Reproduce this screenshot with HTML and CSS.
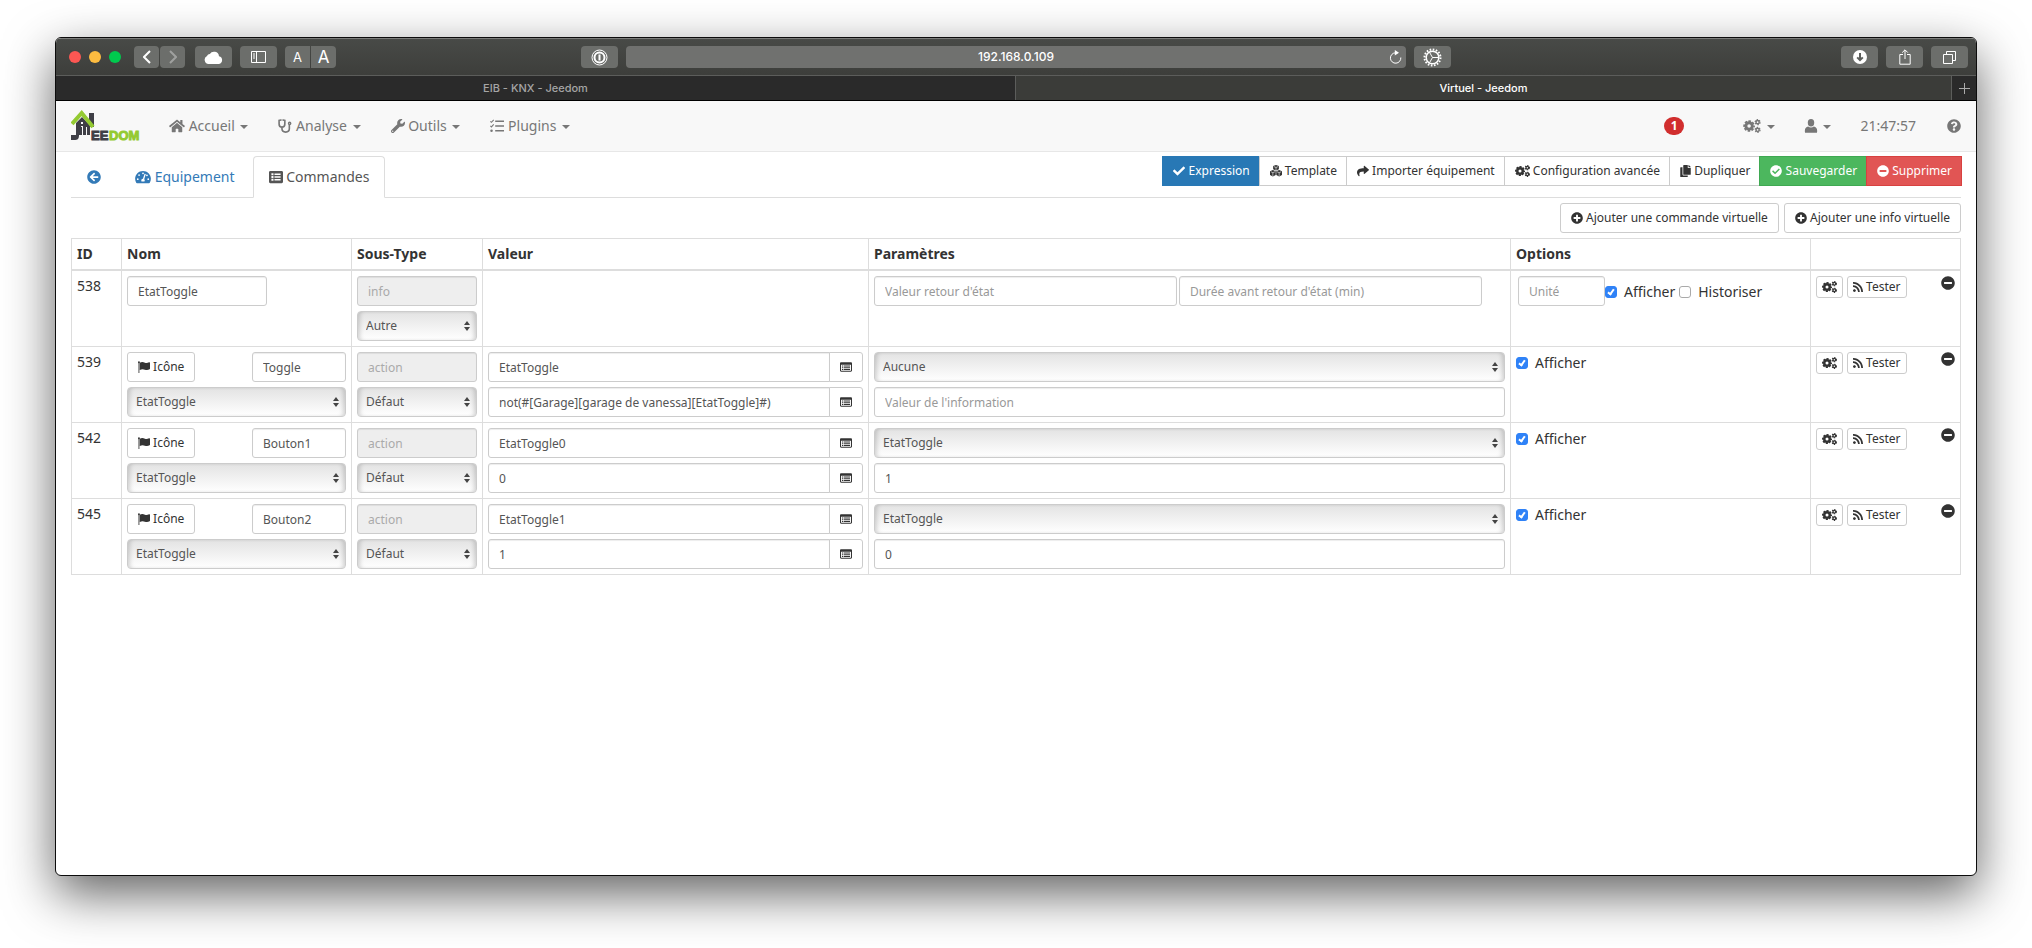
FILE: index.html
```html
<!DOCTYPE html>
<html lang="fr">
<head>
<meta charset="utf-8">
<title>Virtuel - Jeedom</title>
<link rel="stylesheet" href="styles.css">
</head>
<body>
<svg class="sprite" aria-hidden="true">
  <symbol id="check" viewBox="0 0 512 512"><path d="M173.898 439.404l-166.400-166.400c-9.997-9.997-9.997-26.206 0-36.204l36.203-36.204c9.997-9.998 26.207-9.998 36.204 0L192 312.690 432.095 72.596c9.997-9.997 26.207-9.997 36.204 0l36.203 36.204c9.997 9.997 9.997 26.206 0 36.204l-294.400 294.401c-9.998 9.997-26.207 9.997-36.204-.001z"/></symbol>
  <symbol id="share" viewBox="0 0 512 512"><path d="M503.691 189.836L327.687 37.851C312.281 24.546 288 35.347 288 56.015v80.053C127.371 137.907 0 170.100 0 322.326c0 61.441 39.581 122.309 83.333 154.132 13.653 9.931 33.111-2.533 28.077-18.631C66.066 312.814 132.917 274.316 288 272.085V360c0 20.700 24.300 31.453 39.687 18.164l176.004-152c11.071-9.562 11.086-26.753 0-36.328z"/></symbol>
  <symbol id="check-circle" viewBox="0 0 512 512"><path d="M504 256c0 136.967-111.033 248-248 248S8 392.967 8 256 119.033 8 256 8s248 111.033 248 248zM227.314 387.314l184-184c6.248-6.248 6.248-16.379 0-22.627l-22.627-22.627c-6.248-6.249-16.379-6.249-22.628 0L216 308.118l-70.059-70.059c-6.248-6.248-16.379-6.248-22.628 0l-22.627 22.627c-6.248 6.248-6.248 16.379 0 22.627l104 104c6.249 6.249 16.379 6.249 22.628.001z"/></symbol>
  <symbol id="minus-circle" viewBox="0 0 512 512"><path d="M256 8C119 8 8 119 8 256s111 248 248 248 248-111 248-248S393 8 256 8zM124 296c-6.600 0-12-5.400-12-12v-56c0-6.600 5.400-12 12-12h264c6.600 0 12 5.400 12 12v56c0 6.600-5.400 12-12 12H124z"/></symbol>
  <symbol id="plus-circle" viewBox="0 0 512 512"><path d="M256 8C119 8 8 119 8 256s111 248 248 248 248-111 248-248S393 8 256 8zm144 276c0 6.600-5.400 12-12 12h-92v92c0 6.600-5.400 12-12 12h-56c-6.600 0-12-5.400-12-12v-92h-92c-6.600 0-12-5.400-12-12v-56c0-6.600 5.400-12 12-12h92v-92c0-6.600 5.400-12 12-12h56c6.600 0 12 5.400 12 12v92h92c6.600 0 12 5.400 12 12v56z"/></symbol>
  <symbol id="cogs" viewBox="0 0 640 512"><g fill="none" stroke="currentColor"><circle cx="214" cy="256" r="118" stroke-width="106"/><circle cx="214" cy="256" r="182" stroke-width="64" stroke-dasharray="92 50.940" stroke-dashoffset="46"/><circle cx="525" cy="116" r="58" stroke-width="54"/><circle cx="525" cy="116" r="90" stroke-width="44" stroke-dasharray="54 40.250"/><circle cx="525" cy="396" r="58" stroke-width="54"/><circle cx="525" cy="396" r="90" stroke-width="44" stroke-dasharray="54 40.250"/></g></symbol>
  <symbol id="home" viewBox="0 0 576 512"><path d="M280 148L96 300v164c0 9 7 16 16 16h112c9 0 16-7 16-16v-96c0-9 7-16 16-16h64c9 0 16 7 16 16v96c0 9 7 16 16 16h112c9 0 16-7 16-16V300L296 148c-5-4-11-4-16 0z"/><path d="M572 251l-84-69V44c0-7-5-12-12-12h-56c-7 0-12 5-12 12v72l-89-74c-18-14-44-14-62 0L4 251c-5 4-6 12-2 17l26 31c4 5 12 6 17 2L280 107c5-4 11-4 16 0l235 194c5 4 13 3 17-2l26-31c4-5 3-13-2-17z"/></symbol>
  <symbol id="stethoscope" viewBox="0 0 512 512"><g fill="none" stroke="currentColor" stroke-width="60" stroke-linecap="round"><path d="M110 36L40 50v130c0 150 210 150 210 0V50L184 36M145 300v60c0 160 270 160 270 0V224"/><circle cx="425" cy="160" r="42" stroke-width="48"/></g></symbol>
  <symbol id="wrench" viewBox="0 0 512 512"><path d="M507.730 109.100c-2.240-9.030-13.540-12.090-20.120-5.510l-74.360 74.360-67.880-11.310-11.310-67.880 74.360-74.360c6.620-6.620 3.430-17.900-5.660-20.160-47.380-11.740-99.550.910-136.580 37.930-39.640 39.640-50.550 97.100-34.050 147.200L18.740 402.760c-24.990 24.990-24.990 65.510 0 90.500 24.990 24.990 65.510 24.990 90.500 0l213.210-213.210c50.120 16.710 107.470 5.680 147.370-34.220 37.070-37.070 49.700-89.320 37.910-136.730zM64 472c-13.250 0-24-10.750-24-24 0-13.260 10.750-24 24-24s24 10.740 24 24c0 13.250-10.750 24-24 24z"/></symbol>
  <symbol id="tasks" viewBox="0 0 512 512"><path d="M190 58h322v56H190zM190 228h322v56H190zM190 398h322v56H190z"/><circle cx="56" cy="426" r="46"/><path fill="none" stroke="currentColor" stroke-width="40" d="M12 84l40 38 84-88M12 250l40 38 84-88"/></symbol>
  <symbol id="user" viewBox="0 0 448 512"><ellipse cx="224" cy="140" rx="118" ry="138"/><path d="M120 272c60 46 148 46 208 0 80 18 120 70 120 150v50c0 20-10 32-32 32H32c-22 0-32-12-32-32v-50c0-80 40-132 120-150z"/></symbol>
  <symbol id="question" viewBox="0 0 512 512"><path d="M504 256c0 136.997-111.043 248-248 248S8 392.997 8 256C8 119.083 119.043 8 256 8s248 111.083 248 248zM262.655 90c-54.497 0-89.255 22.957-116.549 63.758-3.536 5.286-2.353 12.415 2.715 16.258l34.699 26.310c5.205 3.947 12.621 3.008 16.665-2.122 17.864-22.658 30.113-35.797 57.303-35.797 20.429 0 45.698 13.148 45.698 32.958 0 14.976-12.363 22.667-32.534 33.976C247.128 238.528 216 254.941 216 296v4c0 6.627 5.373 12 12 12h56c6.627 0 12-5.373 12-12v-1.333c0-28.462 83.186-29.647 83.186-106.667 0-58.002-60.165-102-116.531-102zM256 338c-25.365 0-46 20.635-46 46 0 25.364 20.635 46 46 46s46-20.636 46-46c0-25.365-20.635-46-46-46z"/></symbol>
  <symbol id="arrow-left" viewBox="0 0 512 512"><path d="M256 504C119 504 8 393 8 256S119 8 256 8s248 111 248 248-111 248-248 248zm28.900-143.600L209.400 288H392c13.300 0 24-10.700 24-24v-16c0-13.300-10.700-24-24-24H209.400l75.500-72.400c9.700-9.300 9.900-24.800.4-34.300l-11-10.900c-9.400-9.400-24.600-9.400-33.900 0L107.700 239c-9.400 9.400-9.400 24.600 0 33.900l132.700 132.700c9.400 9.400 24.600 9.400 33.900 0l11-10.900c9.500-9.500 9.300-25-.4-34.300z"/></symbol>
  <symbol id="gauge" viewBox="0 0 576 512"><path fill-rule="evenodd" d="M288 32C129 32 0 161 0 320c0 53 14 102 39 145 6 9 16 15 27 15h444c11 0 21-6 27-15 25-43 39-92 39-145C576 161 447 32 288 32zm-32 88a32 32 0 1 0 64 0 32 32 0 1 0-64 0zM112 184a32 32 0 1 0 64 0 32 32 0 1 0-64 0zM64 336a32 32 0 1 0 64 0 32 32 0 1 0-64 0zM448 336a32 32 0 1 0 64 0 32 32 0 1 0-64 0zM400 196a32 32 0 1 0 64 0 32 32 0 1 0-64 0zM346 134l46 14-60 190c28 24 24 62 8 78H232c-20-46 6-90 54-94z"/></symbol>
  <symbol id="list-alt" viewBox="0 0 512 512"><path fill-rule="evenodd" d="M48 32h416c27 0 48 21 48 48v352c0 27-21 48-48 48H48c-27 0-48-21-48-48V80c0-27 21-48 48-48zm40 88v76h76v-76zm0 100v76h76v-76zm0 100v76h76v-76zM200 128v56h224v-56zm0 100v56h224v-56zm0 100v56h224v-56z"/></symbol>
  <symbol id="window-list" viewBox="0 0 512 448"><path fill-rule="evenodd" d="M48 24h416c27 0 48 21 48 48v304c0 27-21 48-48 48H48c-27 0-48-21-48-48V72c0-27 21-48 48-48zM44 130v250h424V130zM84 164h50v40H84zm76 0h268v40H160zM84 236h50v40H84zm76 0h268v40H160zM84 308h50v40H84zm76 0h268v40H160z"/></symbol>
  <symbol id="copy" viewBox="0 0 448 512"><path d="M320 448v40c0 13.255-10.745 24-24 24H24c-13.255 0-24-10.745-24-24V120c0-13.255 10.745-24 24-24h72v296c0 30.879 25.121 56 56 56h168zm0-344V0H152c-13.255 0-24 10.745-24 24v368c0 13.255 10.745 24 24 24h272c13.255 0 24-10.745 24-24V128H344c-13.200 0-24-10.800-24-24zm120.971-31.029L375.029 7.029A24 24 0 0 0 358.059 0H352v96h96v-6.059a24 24 0 0 0-7.029-16.970z"/></symbol>
  <symbol id="rss" viewBox="0 0 448 512"><path d="M128.081 415.959c0 35.369-28.672 64.041-64.041 64.041S0 451.328 0 415.959s28.672-64.041 64.041-64.041 64.040 28.673 64.040 64.041zm175.660 47.250c-8.354-154.600-132.185-278.587-286.950-286.950C7.656 175.765 0 183.105 0 192.253v48.069c0 8.415 6.490 15.472 14.887 16.018 111.832 7.284 201.473 96.702 208.772 208.772.547 8.397 7.604 14.887 16.018 14.887h48.069c9.149.001 16.489-7.655 15.995-16.790zm144.249.288C439.596 229.677 251.465 40.445 16.503 32.010 7.473 31.686 0 38.981 0 48.016v48.068c0 8.625 6.835 15.645 15.453 15.999 191.179 7.839 344.627 161.316 352.465 352.465.353 8.618 7.373 15.453 15.999 15.453h48.068c9.034-.001 16.329-7.474 16.005-16.504z"/></symbol>
  <symbol id="flag" viewBox="0 0 512 512"><circle cx="40" cy="52" r="40"/><path d="M22 50h36v462H22zM76 76c90-56 150-30 220-2 60 24 110 14 176-20 20-10 40 0 40 20v250c0 14-6 22-18 30-60 40-130 44-200 16-70-26-130-34-218 14z"/></symbol>
  <symbol id="cubes" viewBox="0 0 512 512"><path d="M256 0l122 44v142l-122 52-122-52V44zM122 216l122 46v160l-122 72L0 422V262zM390 216l122 46v160l-122 72-122-72V262z"/><path fill="none" stroke="#fff" stroke-width="26" d="M166 70l90 34 90-34M256 104v110M34 288l88 36 92-36M122 324v150M298 288l92 36 88-36M390 324v150"/></symbol>
</svg>

<div class="window">
  <header class="toolbar">
    <div class="tools tools-left">
      <span class="dot dot-red"></span><span class="dot dot-yellow"></span><span class="dot dot-green"></span>
      <div class="pair pair-nav">
        <button class="tool tool-narrow" aria-label="Précédent"><svg width="8" height="14" viewBox="0 0 8 14"><path d="M7 1L1 7l6 6"/></svg></button>
        <button class="tool tool-narrow tool-off" aria-label="Suivant"><svg width="8" height="14" viewBox="0 0 8 14"><path d="M1 1l6 6-6 6"/></svg></button>
      </div>
      <button class="tool" aria-label="iCloud"><svg class="solid" width="19" height="13" viewBox="0 0 19 13"><path d="M4.500 13A4.300 4.300 0 0 1 3 4.900 3 3 0 0 1 5.800 3 5 5 0 0 1 15 5.200 4 4 0 0 1 15 13z"/></svg></button>
      <button class="tool" aria-label="Barre latérale"><svg width="15" height="12" viewBox="0 0 15 12"><path d="M.5.5h14v11H.5zM5.500.5v11M2 3h2M2 5h2M2 7h2"/></svg></button>
      <div class="pair pair-joined">
        <button class="tool tool-narrow letter-small">A</button>
        <button class="tool tool-narrow letter-big">A</button>
      </div>
    </div>
    <div class="tools tools-center">
      <button class="tool" aria-label="1Password"><svg width="17" height="17" viewBox="0 0 17 17"><circle cx="8.500" cy="8.500" r="7.500"/><circle cx="8.500" cy="8.500" r="5" stroke-width="2"/><path stroke-width="2" d="M8.500 5.500v6"/></svg></button>
      <div class="address"><span>192.168.0.109</span><button class="reload" aria-label="Recharger"><svg width="13" height="14" viewBox="0 0 13 14"><path d="M11.800 7.500A5.200 5.200 0 1 1 6.500 2.800h2"/><path class="tip" d="M5.800 0l4.200 2.800-4.200 2.800z"/></svg></button></div>
      <button class="tool" aria-label="Bloqueur"><svg width="19" height="19" viewBox="0 0 19 19"><circle cx="9.500" cy="9.500" r="6.300" stroke-width="1.500"/><circle cx="9.500" cy="9.500" r="8" stroke-width="2" stroke-dasharray="1.600 1.540"/><path d="M9.500 9.500h6M9.500 9.500l-3-5.200M9.500 9.500l-3 5.200"/></svg></button>
    </div>
    <div class="tools tools-right">
      <button class="tool" aria-label="Téléchargements"><svg width="14" height="14" viewBox="0 0 14 14"><circle class="fill" cx="7" cy="7" r="7"/><path class="dark" d="M7 3v7M4.200 7.400L7 10.200l2.800-2.800"/></svg></button>
      <button class="tool" aria-label="Partager"><svg width="12" height="16" viewBox="0 0 12 16"><path d="M4 5.500H.8v9.700h10.400V5.500H8M6 10V1M3.200 3.600L6 .8l2.800 2.800"/></svg></button>
      <button class="tool" aria-label="Onglets"><svg width="13" height="13" viewBox="0 0 13 13"><path d="M.5 3.500h9v9h-9zM3.500 3.500v-3h9v9h-3"/></svg></button>
    </div>
  </header>

  <div class="tabbar">
    <button class="browser-tab">EIB - KNX - Jeedom</button>
    <button class="browser-tab is-active">Virtuel - Jeedom</button>
    <button class="new-tab" aria-label="Nouvel onglet"><svg width="13" height="13" viewBox="0 0 13 13"><path d="M6.500 1v11M1 6.500h11"/></svg></button>
  </div>

  <nav class="navbar">
    <a class="brand" href="#" aria-label="Jeedom">
      <svg width="72" height="36" viewBox="0 -2 72 36">
        <path fill="#3f3f46" d="M18 3h5v14h-5zM5 13l6-6 8 8v10H8c0 4-1 5-5 5H0v-5h5z"/>
        <path fill="#f8f8f8" d="M10 12h2v2h-2zM10 16h2v14h-1V17h-1zM15 17h1v8h-1z"/>
        <path fill="none" stroke="#94ca32" stroke-width="4" d="M1 14L10.700 3 22 17"/>
        <text x="20" y="30" class="logo-dark">EE</text><text x="38" y="30" class="logo-green">DOM</text>
      </svg>
    </a>
    <ul class="menu">
      <li><a href="#"><svg class="ico w16"><use href="#home"/></svg> Accueil <b class="caret"></b></a></li>
      <li><a href="#"><svg class="ico w14"><use href="#stethoscope"/></svg> Analyse <b class="caret"></b></a></li>
      <li><a href="#"><svg class="ico w14"><use href="#wrench"/></svg> Outils <b class="caret"></b></a></li>
      <li><a href="#"><svg class="ico w14"><use href="#tasks"/></svg> Plugins <b class="caret"></b></a></li>
    </ul>
    <ul class="menu menu-right">
      <li class="alert"><span class="badge">1</span></li>
      <li><a href="#" aria-label="Réglages"><svg class="ico w18"><use href="#cogs"/></svg> <b class="caret"></b></a></li>
      <li><a href="#" aria-label="Profil"><svg class="ico w14"><use href="#user"/></svg> <b class="caret"></b></a></li>
      <li><a href="#">21:47:57</a></li>
      <li><a href="#" aria-label="Aide"><svg class="ico w14"><use href="#question"/></svg></a></li>
    </ul>
  </nav>

  <main class="page">
    <div class="page-head">
      <ul class="tabs">
        <li><a href="#" aria-label="Retour"><svg class="ico w14"><use href="#arrow-left"/></svg></a></li>
        <li><a href="#"><svg class="ico w16"><use href="#gauge"/></svg> Equipement</a></li>
        <li><a class="current" href="#"><svg class="ico w14"><use href="#list-alt"/></svg> Commandes</a></li>
      </ul>
      <div class="btn-group">
        <button class="btn btn-primary"><svg class="ico w12"><use href="#check"/></svg> Expression</button>
        <button class="btn"><svg class="ico w12"><use href="#cubes"/></svg> Template</button>
        <button class="btn"><svg class="ico w12"><use href="#share"/></svg> Importer équipement</button>
        <button class="btn"><svg class="ico w15"><use href="#cogs"/></svg> Configuration avancée</button>
        <button class="btn"><svg class="ico w11"><use href="#copy"/></svg> Dupliquer</button>
        <button class="btn btn-success"><svg class="ico w12"><use href="#check-circle"/></svg> Sauvegarder</button>
        <button class="btn btn-danger"><svg class="ico w12"><use href="#minus-circle"/></svg> Supprimer</button>
      </div>
    </div>

    <div class="add-row">
      <button class="btn"><svg class="ico w12"><use href="#plus-circle"/></svg> Ajouter une commande virtuelle</button>
      <button class="btn"><svg class="ico w12"><use href="#plus-circle"/></svg> Ajouter une info virtuelle</button>
    </div>

    <table class="commands">
      <colgroup><col class="c-id"><col class="c-name"><col class="c-type"><col class="c-value"><col><col class="c-options"><col class="c-actions"></colgroup>
      <thead><tr><th>ID</th><th>Nom</th><th>Sous-Type</th><th>Valeur</th><th>Paramètres</th><th>Options</th><th></th></tr></thead>
      <tbody>
        <tr>
          <td>538</td>
          <td><input class="field name-only" aria-label="Nom" value="EtatToggle"></td>
          <td><div class="stack"><input class="field" aria-label="Type" value="info" disabled><span class="pick"><select aria-label="Sous-type"><option>Autre</option></select></span></div></td>
          <td></td>
          <td><div class="halves"><input class="field" aria-label="Valeur retour d'état" placeholder="Valeur retour d'état"><input class="field" aria-label="Durée avant retour d'état" placeholder="Durée avant retour d'état (min)"></div></td>
          <td><div class="options"><input class="field unit" aria-label="Unité" placeholder="Unité"><label class="tick"><input type="checkbox" checked>Afficher</label><label class="tick"><input type="checkbox">Historiser</label></div></td>
          <td><div class="actions"><button class="btn btn-xs" aria-label="Configurer"><svg class="ico w15"><use href="#cogs"/></svg></button><button class="btn btn-xs"><svg class="ico w10"><use href="#rss"/></svg> Tester</button><button class="remove" aria-label="Supprimer"><svg class="ico w14"><use href="#minus-circle"/></svg></button></div></td>
        </tr>
        <tr>
          <td>539</td>
          <td><div class="stack"><div class="name-row"><button class="btn"><svg class="ico w12"><use href="#flag"/></svg> Icône</button><input class="field" aria-label="Nom" value="Toggle"></div><span class="pick"><select aria-label="Info liée"><option>EtatToggle</option></select></span></div></td>
          <td><div class="stack"><input class="field" aria-label="Type" value="action" disabled><span class="pick"><select aria-label="Sous-type"><option>Défaut</option></select></span></div></td>
          <td><div class="stack"><div class="group"><input class="field" aria-label="Nom information" value="EtatToggle"><button class="btn" aria-label="Rechercher"><svg class="ico w12"><use href="#window-list"/></svg></button></div><div class="group"><input class="field" aria-label="Valeur" value="not(#[Garage][garage de vanessa][EtatToggle]#)"><button class="btn" aria-label="Rechercher"><svg class="ico w12"><use href="#window-list"/></svg></button></div></div></td>
          <td><div class="stack"><span class="pick"><select aria-label="Information à mettre à jour"><option>Aucune</option></select></span><input class="field" aria-label="Valeur de l'information" placeholder="Valeur de l'information"></div></td>
          <td><label class="tick"><input type="checkbox" checked>Afficher</label></td>
          <td><div class="actions"><button class="btn btn-xs" aria-label="Configurer"><svg class="ico w15"><use href="#cogs"/></svg></button><button class="btn btn-xs"><svg class="ico w10"><use href="#rss"/></svg> Tester</button><button class="remove" aria-label="Supprimer"><svg class="ico w14"><use href="#minus-circle"/></svg></button></div></td>
        </tr>
        <tr>
          <td>542</td>
          <td><div class="stack"><div class="name-row"><button class="btn"><svg class="ico w12"><use href="#flag"/></svg> Icône</button><input class="field" aria-label="Nom" value="Bouton1"></div><span class="pick"><select aria-label="Info liée"><option>EtatToggle</option></select></span></div></td>
          <td><div class="stack"><input class="field" aria-label="Type" value="action" disabled><span class="pick"><select aria-label="Sous-type"><option>Défaut</option></select></span></div></td>
          <td><div class="stack"><div class="group"><input class="field" aria-label="Nom information" value="EtatToggle0"><button class="btn" aria-label="Rechercher"><svg class="ico w12"><use href="#window-list"/></svg></button></div><div class="group"><input class="field" aria-label="Valeur" value="0"><button class="btn" aria-label="Rechercher"><svg class="ico w12"><use href="#window-list"/></svg></button></div></div></td>
          <td><div class="stack"><span class="pick"><select aria-label="Information à mettre à jour"><option>EtatToggle</option></select></span><input class="field" aria-label="Valeur de l'information" value="1"></div></td>
          <td><label class="tick"><input type="checkbox" checked>Afficher</label></td>
          <td><div class="actions"><button class="btn btn-xs" aria-label="Configurer"><svg class="ico w15"><use href="#cogs"/></svg></button><button class="btn btn-xs"><svg class="ico w10"><use href="#rss"/></svg> Tester</button><button class="remove" aria-label="Supprimer"><svg class="ico w14"><use href="#minus-circle"/></svg></button></div></td>
        </tr>
        <tr>
          <td>545</td>
          <td><div class="stack"><div class="name-row"><button class="btn"><svg class="ico w12"><use href="#flag"/></svg> Icône</button><input class="field" aria-label="Nom" value="Bouton2"></div><span class="pick"><select aria-label="Info liée"><option>EtatToggle</option></select></span></div></td>
          <td><div class="stack"><input class="field" aria-label="Type" value="action" disabled><span class="pick"><select aria-label="Sous-type"><option>Défaut</option></select></span></div></td>
          <td><div class="stack"><div class="group"><input class="field" aria-label="Nom information" value="EtatToggle1"><button class="btn" aria-label="Rechercher"><svg class="ico w12"><use href="#window-list"/></svg></button></div><div class="group"><input class="field" aria-label="Valeur" value="1"><button class="btn" aria-label="Rechercher"><svg class="ico w12"><use href="#window-list"/></svg></button></div></div></td>
          <td><div class="stack"><span class="pick"><select aria-label="Information à mettre à jour"><option>EtatToggle</option></select></span><input class="field" aria-label="Valeur de l'information" value="0"></div></td>
          <td><label class="tick"><input type="checkbox" checked>Afficher</label></td>
          <td><div class="actions"><button class="btn btn-xs" aria-label="Configurer"><svg class="ico w15"><use href="#cogs"/></svg></button><button class="btn btn-xs"><svg class="ico w10"><use href="#rss"/></svg> Tester</button><button class="remove" aria-label="Supprimer"><svg class="ico w14"><use href="#minus-circle"/></svg></button></div></td>
        </tr>
      </tbody>
    </table>
  </main>
</div>
</body>
</html>
```

FILE: styles.css
```css
* { box-sizing: border-box; }

body {
  margin: 0;
  min-height: 100vh;
  padding: 37px 55px 72px;
  display: flex;
  flex-direction: column;
  background: #fff;
  color: #333;
  font: 14px/20px "Noto Sans", "Open Sans", sans-serif;
}

button, input, select { font: inherit; color: inherit; margin: 0; }
button { background: none; border: 0; padding: 0; }
ul { list-style: none; margin: 0; padding: 0; }
a { text-decoration: none; color: #337ab7; }

.sprite { position: absolute; width: 0; height: 0; }

.window {
  flex: 1;
  display: flex;
  flex-direction: column;
  border: 1px solid #0c0c0c;
  border-radius: 6px;
  overflow: hidden;
  background: #fff;
  box-shadow: 0 18px 50px rgba(0, 0, 0, .62);
}

/* Browser chrome */
.toolbar {
  display: grid;
  grid-template-columns: 1fr 45.7% 1fr;
  align-items: center;
  height: 38px;
  padding: 0 8px;
  background: linear-gradient(#484a47, #3d3e3b);
  border-top: 1px solid #7b7c7a;
  border-bottom: 1px solid #5c5d5b;
  font-family: Inter, "Liberation Sans", sans-serif;
  color: #fff;
}

.tools { display: flex; align-items: center; gap: 8px; }
.tools-left { padding-left: 5px; }
.tools-right { justify-content: flex-end; }
.dot { width: 12px; height: 12px; border-radius: 50%; }
.dot-red { background: #fc5753; }
.dot-yellow { background: #fdbc40; }
.dot-green { background: #00ca4e; }

.tool {
  display: flex;
  align-items: center;
  justify-content: center;
  width: 37px;
  height: 22px;
  flex: none;
  border-radius: 4px;
  background: #6c6e6b;
}
.tool-narrow { width: 25px; }
.tool-off svg { opacity: .35; }
.tool svg, .reload svg, .new-tab svg { fill: none; stroke: #fff; stroke-width: 1; display: block; }
.pair-nav svg { stroke-width: 2; }
.tool svg.solid { fill: #fff; stroke: none; }
.tool .fill { fill: #fff; stroke: none; }
.tool .dark { stroke: #5c5e5b; stroke-width: 2; }
.reload .tip { fill: #fff; stroke: none; }
.pair { display: flex; gap: 1px; }
.pair-nav { margin: 0 2px 0 5px; }
.pair-joined .tool:first-child { border-radius: 4px 0 0 4px; }
.pair-joined .tool:last-child { border-radius: 0 4px 4px 0; }
.letter-small { font-size: 13px; }
.letter-big { font-size: 17px; }

.address {
  flex: 1;
  display: grid;
  grid-template-columns: 1fr auto 1fr;
  align-items: center;
  height: 22px;
  padding: 0 4px;
  border-radius: 4px;
  background: #70716f;
  font-size: 12px;
  font-weight: 500;
}
.address span { grid-column: 2; }
.reload { justify-self: end; }

.tabbar {
  display: flex;
  height: 25px;
  border-bottom: 1px solid #000;
  background: #2a2a2a;
  font: 500 11px/24px Inter, "Liberation Sans", sans-serif;
}
.browser-tab { flex: 960 1 0; color: #a5a5a5; }
.browser-tab.is-active {
  flex: 936 1 0;
  border: solid #5c5d5b;
  border-width: 0 1px;
  background: #3b3c39;
  color: #fff;
}
.new-tab { display: flex; align-items: center; justify-content: center; width: 24px; }
.new-tab svg { stroke: #aaa; }

/* Application navbar */
.navbar {
  display: flex;
  align-items: center;
  height: 51px;
  padding: 0 0 0 15px;
  background: #f8f8f8;
  border-bottom: 1px solid #e7e7e7;
}
.brand { display: flex; margin-right: 11px; }
.logo-dark, .logo-green {
  font: bold 13px "Liberation Sans", sans-serif;
  fill: #3f3f46;
  stroke: #3f3f46;
}
.logo-green { fill: #94ca32; stroke: #94ca32; }
.menu { display: flex; align-items: center; }
.menu a { display: block; padding: 15px; color: #777; }
.menu-right { margin-left: auto; }
.menu-right .alert { margin-right: 45px; }
.menu-right a { padding: 15px 15px 15px 14px; }
.menu-right li:last-child a { padding-left: 16px; }
.badge {
  display: block;
  min-width: 20px;
  border-radius: 10px;
  background: #d12e2e;
  color: #fff;
  font: bold 12px/18px "Noto Sans", sans-serif;
  text-align: center;
}
.caret {
  display: inline-block;
  margin-left: 2px;
  vertical-align: middle;
  border: 4px solid transparent;
  border-top-color: currentColor;
  border-bottom: 0;
}

.ico { display: inline-block; height: 14px; vertical-align: -2px; fill: currentColor; }
.btn .ico { height: 12px; }
.w10 { width: 10px; }
.w11 { width: 11px; }
.w12 { width: 12px; }
.w14 { width: 14px; }
.w15 { width: 15px; }
.w16 { width: 16px; }
.w18 { width: 18px; }

/* Page */
.page { flex: 1; padding: 4px 15px; }
.page-head {
  display: flex;
  justify-content: space-between;
  align-items: flex-start;
  border-bottom: 1px solid #ddd;
}
.tabs { display: flex; gap: 2px; margin-bottom: -1px; }
.tabs a {
  display: block;
  padding: 10px 15px;
  border: 1px solid transparent;
  border-radius: 4px 4px 0 0;
}
.tabs .current { border-color: #ddd #ddd #fff; background: #fff; color: #555; }

.btn {
  height: 30px;
  padding: 0 10px;
  border: 1px solid #ccc;
  border-radius: 3px;
  background: #fff;
  color: #333;
  font-size: 12px;
  line-height: 18px;
  white-space: nowrap;
}
.btn-group { display: flex; margin-right: -1px; }
.btn-group .btn { border-radius: 0; margin-left: -1px; padding-right: 9px; }
.btn-group .btn-primary { background: #2878b5; border-color: #2878b5; color: #fff; }
.btn-group .btn-success { background: #4cb75e; border-color: #3fa952; color: #fff; }
.btn-group .btn-danger { background: #e15554; border-color: #d84140; color: #fff; }
.btn-xs { height: 22px; padding: 0 5px; }

.add-row { display: flex; justify-content: flex-end; gap: 5px; padding: 5px 0; }

.commands { width: 100%; border-collapse: collapse; table-layout: fixed; }
.commands th, .commands td {
  padding: 5px;
  border: 1px solid #ddd;
  text-align: left;
  vertical-align: top;
}
.commands th { border-bottom-width: 2px; }
.commands tbody tr { height: 76px; }
.c-id { width: 50px; }
.c-name { width: 230px; }
.c-type { width: 131px; }
.c-value { width: 386px; }
.c-options { width: 300px; }
.c-actions { width: 150px; }

.stack { display: flex; flex-direction: column; gap: 5px; }

.field {
  display: block;
  width: 100%;
  min-width: 0;
  height: 30px;
  padding: 0 10px;
  border: 1px solid #ccc;
  border-radius: 3px;
  background: #fff;
  box-shadow: inset 0 1px 1px rgba(0, 0, 0, .075);
  color: #555;
  font-size: 12px;
}
.field::placeholder { color: #999; opacity: 1; }
.field:disabled { background: #eee; color: #aaa; }
.name-only { width: 140px; }
.unit { width: 87px; margin-left: 2px; }
.name-row { display: flex; justify-content: space-between; }
.name-row .field { width: 94px; }
.halves { display: flex; gap: 2px; }
.halves .field { width: 48%; }

.group { display: flex; }
.group .field { border-radius: 3px 0 0 3px; }
.group .btn { flex: none; margin-left: -1px; border-radius: 0 3px 3px 0; }

.pick { position: relative; display: block; }
.pick select {
  display: block;
  appearance: none;
  width: 100%;
  height: 30px;
  padding: 0 20px 0 8px;
  border: 1px solid #ccc;
  border-radius: 4px;
  background: linear-gradient(#e3e3e3, #fff);
  box-shadow: inset 4px 0 4px -2px rgba(0, 0, 0, .16), inset -4px 0 4px -2px rgba(0, 0, 0, .16);
  color: #555;
  font-size: 12px;
}
.pick::before, .pick::after {
  content: "";
  position: absolute;
  right: 7px;
  border: 3px solid transparent;
}
.pick::before { top: 10px; border-top: 0; border-bottom: 4px solid #444; }
.pick::after { bottom: 10px; border-bottom: 0; border-top: 4px solid #444; }

.options { display: flex; }
.options .tick { margin-right: 4px; }
.tick { display: inline-flex; align-items: center; gap: 7px; padding-top: 1px; }
.tick input {
  appearance: none;
  position: relative;
  width: 12px;
  height: 12px;
  border: 1px solid #aaa;
  border-radius: 3px;
  background: #fff;
}
.tick input:checked { background: #2f82f7; border-color: #2f82f7; }
.tick input:checked::after {
  content: "";
  position: absolute;
  box-sizing: border-box;
  left: 3px;
  top: 1px;
  width: 4px;
  height: 7px;
  border: solid #fff;
  border-width: 0 2px 2px 0;
  transform: rotate(35deg);
}

.actions { display: flex; align-items: flex-start; gap: 4px; }
.remove { margin-left: auto; line-height: 14px; height: 14px; }
.remove .ico { vertical-align: top; }
```
